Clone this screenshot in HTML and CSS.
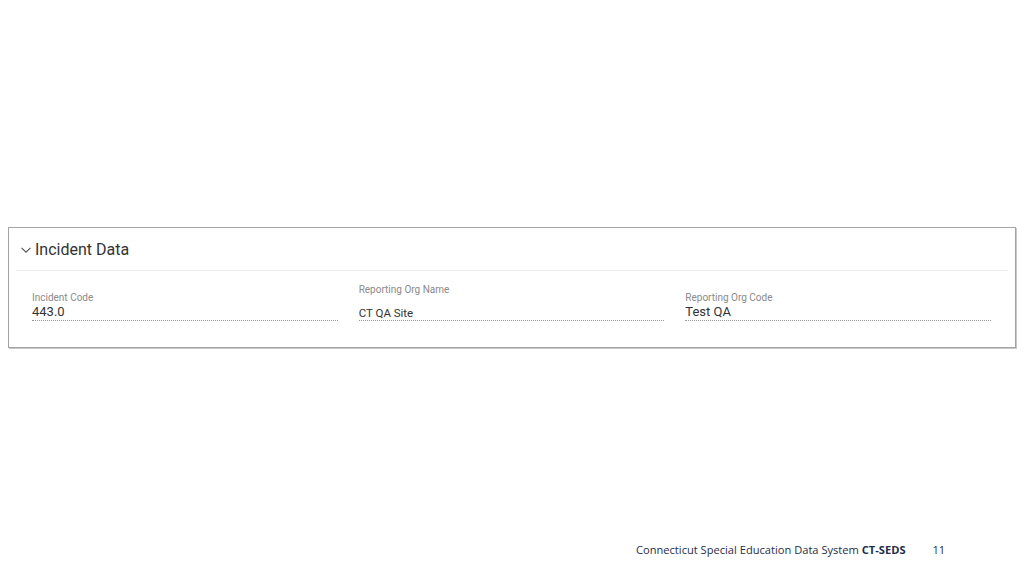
FILE: index.html
```html
<!DOCTYPE html>
<html lang="en">
<head>
<meta charset="utf-8">
<title>Incident Data</title>
<link rel="stylesheet" href="styles.css">
</head>
<body>
<div class="page">
  <section class="card">
    <header class="card-head">
      <svg class="chev" width="10" height="6" viewBox="0 0 10 6"><path d="M0.5 0.8 L5 5.2 L9.5 0.8" fill="none" stroke="#555" stroke-width="1.1"/></svg>
      <h2 class="title">Incident Data</h2>
    </header>
    <div class="divider"></div>
    <div class="fields">
      <div class="field">
        <div class="label">Incident Code</div>
        <div class="value">443.0</div>
      </div>
      <div class="field field-tall">
        <div class="label">Reporting Org Name</div>
        <div class="value value-sm">CT QA Site</div>
      </div>
      <div class="field">
        <div class="label">Reporting Org Code</div>
        <div class="value">Test QA</div>
      </div>
    </div>
  </section>
  <footer class="footer">
    <span class="foot-text">Connecticut Special Education Data System <b>CT-SEDS</b></span>
    <span class="page-num">11</span>
  </footer>
</div>
</body>
</html>
```
FILE: styles.css
```css
html, body {
  margin: 0;
  padding: 0;
  background: #fff;
}
.page {
  width: 1024px;
  height: 576px;
  box-sizing: border-box;
  padding-top: 227px;
  display: flex;
  flex-direction: column;
  overflow: hidden;
  font-family: Roboto, "Liberation Sans", sans-serif;
}
.card {
  margin-left: 8px;
  width: 1006px;
  height: 119px;
  border: 1px solid #a3a3a3;
  box-shadow: 1px 1px 0 #c9c9c9;
  background: #fff;
  flex: none;
}
.card-head {
  display: flex;
  align-items: center;
  height: 42px;
  padding-left: 12px;
}
.chev {
  margin-top: 1px;
  display: block;
}
.title {
  margin: 0 0 0 4px;
  font-size: 16px;
  font-weight: 400;
  color: #333;
}
.divider {
  height: 1px;
  background: #ececec;
  margin: 0 7px;
}
.fields {
  display: grid;
  grid-template-columns: repeat(3, 1fr);
  column-gap: 21px;
  padding: 0 24px 0 23px;
}
.field {
  display: flex;
  flex-direction: column;
  padding-top: 21px;
  height: 28px;
  border-bottom: 1px dotted #9a9a9a;
}
.field-tall {
  padding-top: 13px;
  height: 36px;
}
.label {
  font-size: 10px;
  color: #8a8a8a;
  line-height: 12px;
}
.value {
  font-size: 13px;
  color: #333;
  line-height: 15px;
}
.value-sm {
  font-size: 11.5px;
  margin-top: 10px;
}
.footer {
  margin-top: auto;
  padding: 0 0 18px 636px;
  display: flex;
  align-items: baseline;
  font-family: "Open Sans", "Liberation Sans", sans-serif;
  font-size: 11.12px;
  line-height: 16px;
  color: #1f2d4a;
}
.foot-text b {
  font-weight: 700;
}
.page-num {
  margin-left: 27px;
}
```
